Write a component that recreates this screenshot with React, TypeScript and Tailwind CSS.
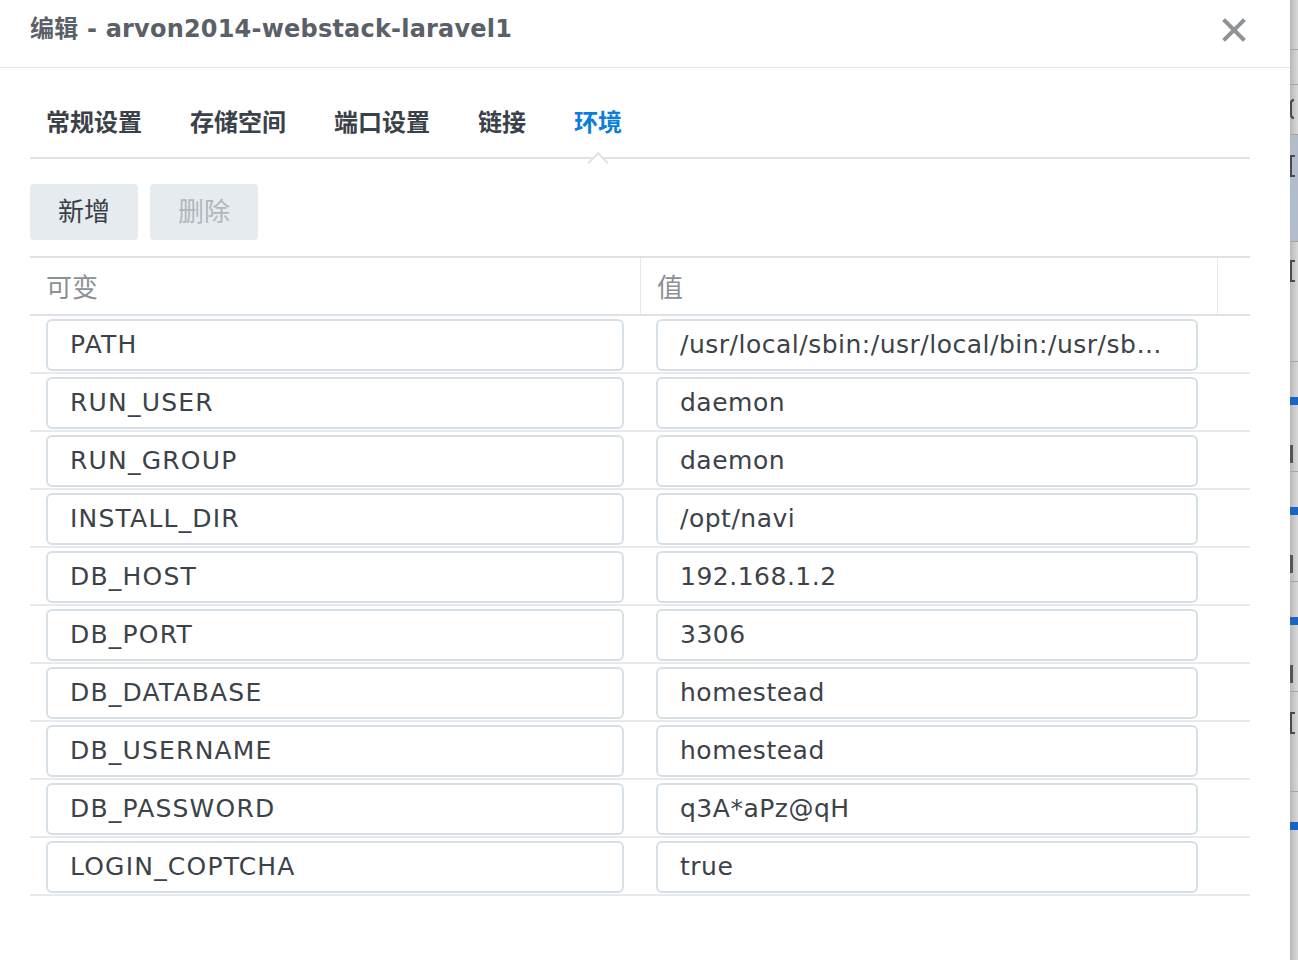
import React from 'react';

const envVars = [
  { name: 'PATH', value: '/usr/local/sbin:/usr/local/bin:/usr/sbin:/usr/bin:/sbin:/bin' },
  { name: 'RUN_USER', value: 'daemon' },
  { name: 'RUN_GROUP', value: 'daemon' },
  { name: 'INSTALL_DIR', value: '/opt/navi' },
  { name: 'DB_HOST', value: '192.168.1.2' },
  { name: 'DB_PORT', value: '3306' },
  { name: 'DB_DATABASE', value: 'homestead' },
  { name: 'DB_USERNAME', value: 'homestead' },
  { name: 'DB_PASSWORD', value: 'q3A*aPz@qH' },
  { name: 'LOGIN_COPTCHA', value: 'true' },
];

const tabs = ['常规设置', '存储空间', '端口设置', '链接', '环境'];

const font = "font-['DejaVu_Sans','Noto_Sans_CJK_SC',sans-serif]";

const App: React.FC = () => {
  return (
    <div className={`flex h-[960px] w-[1298px] overflow-hidden bg-white ${font}`}>
      {/* Dialog */}
      <div className="flex w-[1290px] flex-col bg-white">
        {/* Header */}
        <div className="flex h-[68px] shrink-0 items-center justify-between border-b border-[#e3e7eb] pl-[30px] pr-[44px] pb-[10px]">
          <h1 className="text-[24px] font-bold text-[#5a6068] tracking-[0.2px]">编辑 - arvon2014-webstack-laravel1</h1>
          <svg width="24" height="24" viewBox="0 0 24 24" className="mt-[2px]">
            <path d="M3 3 L21 21 M21 3 L3 21" stroke="#8e939a" strokeWidth="4" strokeLinecap="square" />
          </svg>
        </div>

        <div className="flex flex-col pl-[30px] pr-[40px]">
          {/* Tabs */}
          <div className="relative flex h-[91px] items-end gap-[48px] border-b-2 border-[#dce2e8] px-[16px] pb-[16px]">
            {tabs.map((t) => (
              <div
                key={t}
                className={`relative text-[24px] font-bold leading-[36px] ${t === '环境' ? 'text-[#0b7edc]' : 'text-[#3b4148]'}`}
              >
                {t}
                {t === '环境' && (
                  <span className="absolute left-1/2 top-[50px] h-[15px] w-[15px] -translate-x-1/2 rotate-45 border-l-2 border-t-2 border-[#dce2e8] bg-white" />
                )}
              </div>
            ))}
          </div>

          {/* Toolbar */}
          <div className="flex gap-[12px] pt-[25px] pb-[16px]">
            <button className="h-[56px] w-[108px] rounded-[4px] bg-[#e6ebef] text-[26px] text-[#3b4148]">新增</button>
            <button className="h-[56px] w-[108px] rounded-[4px] bg-[#e6ebef] text-[26px] text-[#b1b6bb]">删除</button>
          </div>

          {/* Table */}
          <div className="border-t-2 border-[#dce2e8]">
            <div className="flex h-[58px] border-b-2 border-[#dce2e8] text-[26px] text-[#8b9095]">
              <div className="flex w-[610px] items-center pl-[16px] pt-[4px]">可变</div>
              <div className="flex w-[577px] items-center border-l border-[#e3e7eb] pl-[16px] pt-[4px]">值</div>
              <div className="flex-1 border-l border-[#e3e7eb]" />
            </div>
            {envVars.map((v) => (
              <div key={v.name} className="flex h-[58px] items-center border-b-2 border-[#e6eaee] pt-[2px]">
                <div className="flex w-[610px] pl-[16px]">
                  <div className="flex h-[52px] w-[578px] items-center rounded-[6px] border-2 border-[#d6dee6] px-[22px] text-[25px] tracking-[1.2px] text-[#3c4249]">
                    <span className="truncate">{v.name}</span>
                  </div>
                </div>
                <div className="flex w-[577px] pl-[16px]">
                  <div className="flex h-[52px] w-[542px] items-center rounded-[6px] border-2 border-[#d6dee6] pl-[22px] pr-[28px] text-[25px] tracking-[0.5px] text-[#3c4249]">
                    <span className="truncate">{v.value}</span>
                  </div>
                </div>
              </div>
            ))}
          </div>
        </div>
      </div>

      {/* Background window peeking out on the right */}
      <div className="flex w-[8px] flex-col bg-gradient-to-r from-[#b9b9b9] to-[#d8d8d8]">
        <div className="h-[50px] border-b border-[#a6a6a6]" />
        <div className="h-[35px] border-b border-[#a6a6a6]" />
        <div className="h-[50px] border-b border-[#a6a6a6] pt-[14px]">
          <div className="h-[20px] w-[4px] rounded-l-full border-2 border-r-0 border-[#4a4a4a]" />
        </div>
        <div className="h-[107px] border-b border-[#a6a6a6] bg-[#b3bccb] pt-[20px]">
          <div className="h-[22px] w-[5px] border-2 border-r-0 border-[#4a4a4a]" />
        </div>
        <div className="h-[120px] border-b border-[#a6a6a6] pt-[18px]">
          <div className="h-[22px] w-[5px] border-2 border-r-0 border-[#4a4a4a]" />
        </div>
        {[0, 1, 2].map((i) => (
          <div key={i} className="flex h-[110px] flex-col gap-[40px] border-b border-[#a6a6a6] pt-[35px]">
            <div className="h-[8px] w-[8px] bg-[#1a64c4]" />
            <div className="h-[18px] w-[3px] bg-[#555]" />
          </div>
        ))}
        <div className="h-[100px] border-b border-[#a6a6a6] pt-[20px]">
          <div className="h-[22px] w-[5px] border-2 border-r-0 border-[#4a4a4a]" />
        </div>
        <div className="flex-1 pt-[30px]">
          <div className="h-[8px] w-[8px] bg-[#1a64c4]" />
        </div>
      </div>
    </div>
  );
};

export default App;
